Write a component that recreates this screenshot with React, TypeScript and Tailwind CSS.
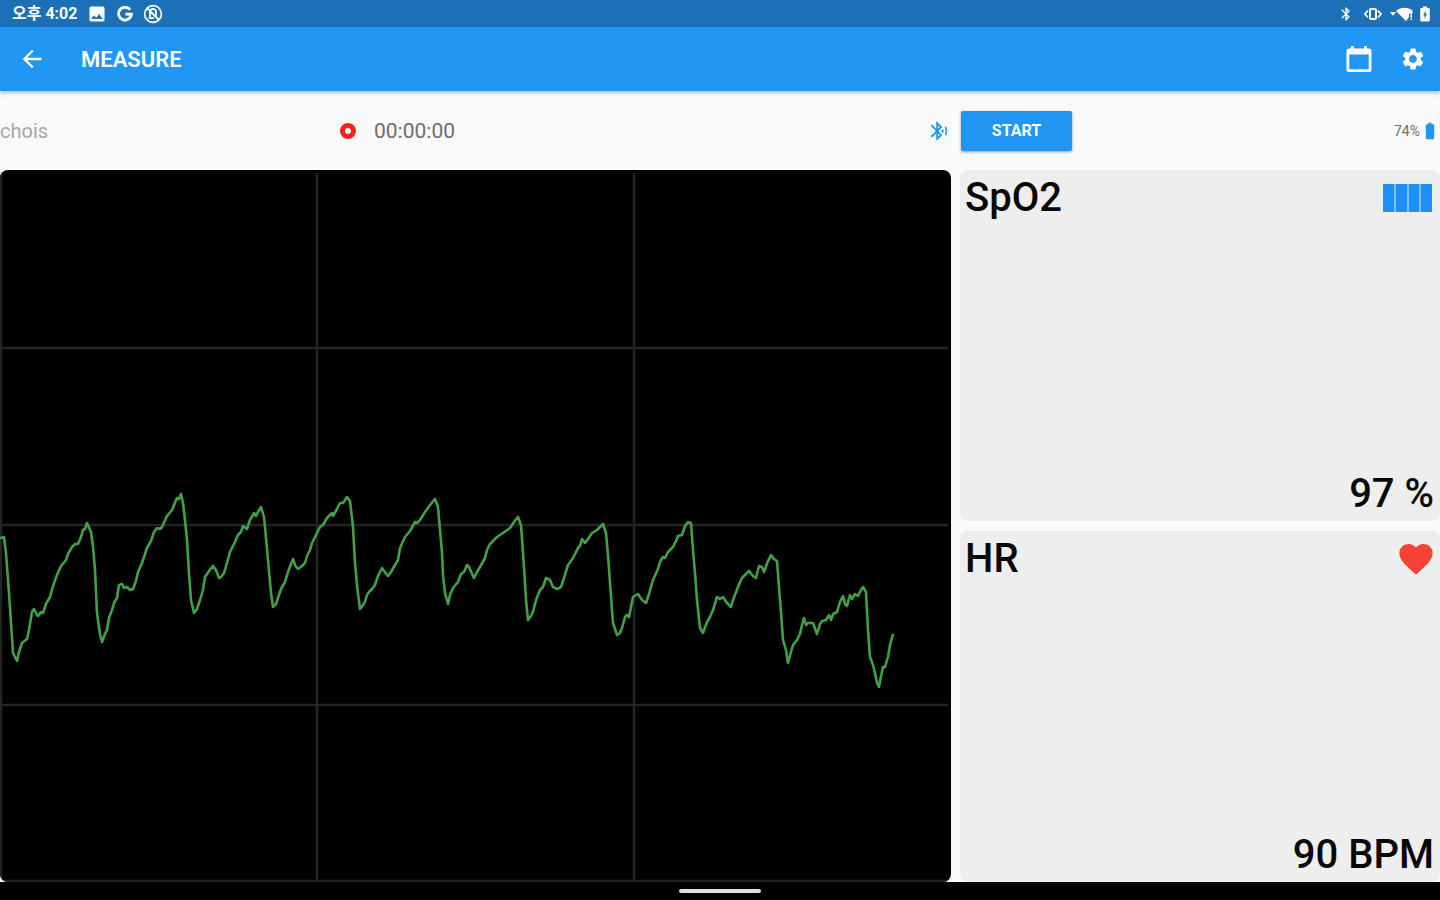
import React from 'react';
import {
  MdArrowBack,
  MdBatteryFull,
  MdBluetooth,
  MdBluetoothAudio,
  MdFavorite,
  MdImage,
  MdSettings,
} from 'react-icons/md';

const CHART_WIDTH = 951;
const CHART_HEIGHT = 712;

// x,y samples of the pulse wave
const WAVE = [
  '0,368 4,367 6,383 9,423 13,483 17,491 19,482 22,473 27,469 29,460 32,442 34,439 36,443 38,446 41,442 43,443 46,434 50,427 53,416 57,405 61,396 66,390 68,384 72,377 75,374 78,374 81,367 83,360 85,359 87,353 91,362 93,376 95,400 97,443 100,464 102,472 105,464 107,460 109,448 112,440 114,433 117,428 119,415 122,414 124,418 127,417 130,420 133,419 136,411 138,402 142,393 147,378 151,371 154,362 157,358 160,359 162,357 167,346 172,340 177,328 179,329 181,324 183,333 185,350 187,370 189,404 191,430 194,443',
  '197,439 200,430 203,420 205,407 209,401 213,396 216,400 219,408 221,407 224,403 227,393 230,382 234,374 238,365 241,362 243,356 247,359 250,350 254,343 256,346 258,342 261,337 264,347 266,368 268,390 271,423 273,437 276,434 278,428 281,419 285,412 288,402 291,394 293,389 295,395 298,399 302,396 305,393 307,386 310,380 312,373 316,365 320,357 323,355 327,348 332,343 333,346 337,339 340,333 343,333 347,327 350,331 353,357 355,393 357,415 360,439',
  '363,435 365,432 367,425 369,422 372,419 375,415 378,406 382,398 384,401 388,406 391,402 395,395 398,390 400,378 405,367 410,361 415,352 417,353 420,350 425,342 430,335 435,329 438,337 440,360 442,383 443,405 445,423 448,434 450,425 453,418 458,412 461,404 464,402 467,395 469,397 474,408 477,402 480,397 485,388 487,380 490,374 497,367 503,363 510,358 514,352 518,347 521,355 524,397 526,430 528,450',
  '531,446 533,442 536,430 540,420 543,417 546,408 550,410 553,417 557,419 561,417 564,408 568,395 573,388 578,378 580,376 582,369 585,373 588,369 592,363 597,360 603,354 606,363 608,385 610,413 613,453 617,465 620,463 622,458 625,447 627,445 629,447 631,437 633,427 638,424 642,430 646,433 649,424 653,410 658,399 660,392 663,387 665,388 668,382 673,377 676,371 678,366 682,365 685,356 688,352 691,353 693,380 695,403 697,430 700,458 703,463',
  '707,452 710,447 713,440 717,427 720,429 723,427 727,433 731,437 733,430 735,425 738,417 742,408 745,405 749,401 753,406 756,408 759,396 762,397 764,402 768,391 771,385 774,389 777,391 779,417 781,442 783,470 786,480 788,493 791,482 793,475 797,470 800,464 802,455 804,448 806,455 808,453 813,453 817,464 820,454 822,451 826,450 829,445 831,450 833,444 837,442 840,432 843,426 845,434 847,436 850,425 852,429 855,424 858,426 861,420 863,417 866,422 868,460 870,487 873,495 875,503 877,513 879,517 881,506 883,497 885,497 888,487 890,475 893,464',
].join(' ');

const StatusBar: React.FC = () => (
  <div className="flex h-[27px] shrink-0 items-center justify-between bg-[#1b70b8] pl-3 pr-2.5 text-white">
    <div className="flex items-center gap-2.5">
      <span className="text-[16px] font-bold leading-5">오후 4:02</span>
      <MdImage className="h-5 w-5" />
      <svg viewBox="0 0 16 16" className="h-4 w-4" fill="none" stroke="currentColor" strokeWidth="2.8">
        <path d="M13 3.6A6.4 6.4 0 1 0 14.4 8.2H8.4" />
      </svg>
      <svg viewBox="0 0 20 20" className="h-5 w-5" fill="none" stroke="currentColor" strokeWidth="1.6">
        <circle cx="10" cy="10" r="8.4" />
        <path d="M4 4l12 12M7 14V8.5a3 3 0 0 1 6-1V14M5.5 14H11" strokeWidth="1.8" />
      </svg>
    </div>
    <div className="flex items-center">
      <MdBluetooth className="mr-2.5 h-4 w-4" />
      <svg viewBox="0 0 18 16" className="mr-2 h-4 w-[18px]" fill="none" stroke="currentColor">
        <rect x="6" y="3" width="6" height="10" rx="1" strokeWidth="2" />
        <path d="M4 4.5L1 8l3 3.5M14 4.5L17 8l-3 3.5" strokeWidth="1.8" />
      </svg>
      <svg viewBox="0 0 6 6" className="h-1.5 w-1.5" fill="currentColor">
        <path d="M0 1h6L3 5z" />
      </svg>
      <svg viewBox="0 0 18 16" className="mr-1.5 h-4 w-[18px]" fill="currentColor">
        <path d="M0 5C5 .8 12 .8 17 5l-1 3h-3v3l-3 4z" />
        <path d="M14.4 8.5h1.6v3h-1.6zM14.4 12.5h1.6V14h-1.6z" />
      </svg>
      <svg viewBox="0 0 10 16" className="h-4 w-2.5" fill="currentColor">
        <path
          fillRule="evenodd"
          d="M3 .5h4V2h1.5A1.3 1.3 0 0 1 9.800 3.300v10.900a1.300 1.300 0 0 1-1.300 1.300h-7a1.300 1.300 0 0 1-1.300-1.300V3.300A1.300 1.300 0 0 1 1.500 2H3zM5.600 4.500L3.200 9.300h1.400v3.700l2.400-5H5.600z"
        />
      </svg>
    </div>
  </div>
);

const AppBar: React.FC = () => (
  <header className="relative flex h-16 shrink-0 items-center bg-[#2196f3] px-4 text-white shadow-[0_2px_4px_rgba(0,0,0,0.25)]">
    <button type="button" aria-label="Back" className="flex h-8 w-8 items-center justify-center">
      <MdArrowBack className="h-7 w-7" />
    </button>
    <h1 className="ml-[33px] pt-0.5 text-[22px] font-semibold leading-7">MEASURE</h1>
    <div className="-mr-0.5 ml-auto flex items-center gap-7">
      <button type="button" aria-label="Calendar">
        <svg viewBox="0 0 26 28" className="h-7 w-[26px]" fill="currentColor">
          <path
            fillRule="evenodd"
            d="M5 1h3v2.500h10V1h3v2.500h2a2.500 2.500 0 0 1 2.500 2.500v18.500A2.500 2.500 0 0 1 23 27H3a2.500 2.500 0 0 1-2.500-2.500V6A2.500 2.500 0 0 1 3 3.500h2zM3.300 9.500v14.700h19.400V9.500z"
          />
        </svg>
      </button>
      <button type="button" aria-label="Settings">
        <MdSettings className="h-[26px] w-[26px]" />
      </button>
    </div>
  </header>
);

const Toolbar: React.FC = () => (
  <div className="grid h-[79px] shrink-0 grid-cols-3">
    <div className="col-span-2 grid grid-cols-[340px_1fr_auto] items-center pr-2.5">
      <span className="text-[20px] leading-6 text-[#a6a6a6]">chois</span>
      <div className="flex items-center gap-[18px]">
        <svg viewBox="0 0 16 16" className="h-4 w-4">
          <circle cx="8" cy="8" r="5.500" fill="none" stroke="#f5221b" strokeWidth="5" />
        </svg>
        <span className="text-[21px] leading-6 text-[#6e6e6e]">00:00:00</span>
      </div>
      <MdBluetoothAudio className="h-[22px] w-[22px] text-[#2196f3]" />
    </div>
    <div className="flex items-center justify-between">
      <button
        type="button"
        className="ml-px h-10 w-[111px] rounded-[2px] bg-[#2196f3] text-[16px] font-bold leading-5 text-white shadow-[0_1px_3px_rgba(0,0,0,0.4)]"
      >
        START
      </button>
      <div className="flex items-center">
        <span className="text-[14px] leading-5 text-[#6e6e6e]">74%</span>
        <MdBatteryFull className="h-5 w-5 text-[#2196f3]" />
      </div>
    </div>
  </div>
);

const PulseChart: React.FC = () => (
  <div className="relative min-h-[480px] overflow-hidden rounded-lg bg-black">
    <svg
      viewBox={`0 0 ${CHART_WIDTH} ${CHART_HEIGHT}`}
      preserveAspectRatio="none"
      className="absolute inset-0 h-full w-full"
      fill="none"
    >
      <g stroke="#242424" strokeWidth="2.5">
        {[1, 317, 634].map((x) => (
          <line key={x} x1={x} y1={3} x2={x} y2={CHART_HEIGHT} />
        ))}
        {[178, 355, 535, 711].map((y) => (
          <line key={y} x1={0} y1={y} x2={948} y2={y} />
        ))}
      </g>
      <polyline points={WAVE} stroke="#43a047" strokeWidth="2.6" strokeLinejoin="round" />
    </svg>
  </div>
);

const SignalBars: React.FC = () => (
  <div className="flex h-7 w-[49px] gap-[2px] bg-[#7fbffa]">
    {[1, 2, 3, 4].map((bar) => (
      <div key={bar} className="flex-1 bg-[#1e90f5]" />
    ))}
  </div>
);

interface VitalCardProps {
  label: string;
  value: string;
  icon: React.ReactNode;
}

const VitalCard: React.FC<VitalCardProps> = ({ label, value, icon }) => (
  <section className="flex flex-col justify-between rounded-lg bg-[#eeeeee] pb-[3px] pl-[5px] pr-1.5 pt-1 text-[40px] font-medium leading-[48px] text-[#080808]">
    <div className="flex items-center justify-between">
      <h2>{label}</h2>
      {icon}
    </div>
    <p className="text-right">{value}</p>
  </section>
);

const App: React.FC = () => {
  return (
    <div className="flex min-h-screen flex-col bg-[#fafafa] font-[Roboto,'Noto_Sans_CJK_KR',sans-serif]">
      <StatusBar />
      <AppBar />
      <Toolbar />
      <main className="grid flex-1 grid-cols-3">
        <div className="col-span-2 grid pr-[9px]">
          <PulseChart />
        </div>
        <div className="grid grid-rows-2 gap-[10px]">
          <VitalCard
            label="SpO2"
            value="97 %"
            icon={
              <div className="pr-0.5">
                <SignalBars />
              </div>
            }
          />
          <VitalCard
            label="HR"
            value="90 BPM"
            icon={<MdFavorite className="-mr-0.5 h-10 w-10 text-[#f44336]" />}
          />
        </div>
      </main>
      <footer className="flex h-[18px] shrink-0 items-center justify-center bg-black">
        <div className="h-1 w-[82px] rounded-full bg-[#e0e0e0]" />
      </footer>
    </div>
  );
};

export default App;
